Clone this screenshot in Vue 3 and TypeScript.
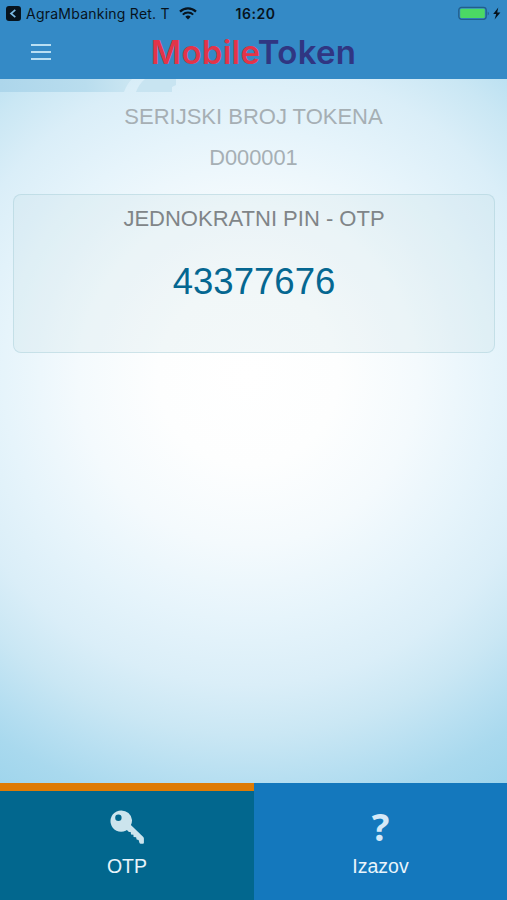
<script setup lang="ts">
import { ref } from 'vue'

interface Tab {
  id: 'otp' | 'challenge'
  label: string
}

const tabs: Tab[] = [
  { id: 'otp', label: 'OTP' },
  { id: 'challenge', label: 'Izazov' },
]
const active = ref<Tab['id']>('otp')
const serial = 'D000001'
const otp = '43377676'
</script>

<template>
  <div class="screen">
    <header class="top">
      <div class="status">
        <div class="status-left">
          <svg class="back" viewBox="0 0 15 15">
            <rect width="15" height="15" rx="3" fill="#07131d" />
            <path d="M9.3 3.9 5 7.5l4.3 3.6" fill="none" stroke="#7dbbe4" stroke-width="1.7" />
          </svg>
          <span class="carrier">AgraMbanking Ret. T</span>
          <svg class="wifi" viewBox="0 0 18 13" fill="none" stroke="#07131d">
            <path d="M1 4.6a11.4 11.4 0 0 1 16 0" stroke-width="2.2" />
            <path d="M3.8 7.6a7.4 7.4 0 0 1 10.4 0" stroke-width="2" />
            <path d="M9 12.4 6.3 9.7a3.9 3.9 0 0 1 5.4 0Z" fill="#07131d" stroke="none" />
          </svg>
        </div>
        <span class="clock">16:20</span>
        <div class="status-right">
          <svg class="battery" viewBox="0 0 43 15">
            <rect x="0.8" y="1.3" width="27.4" height="12" rx="2.8" fill="none" stroke="#235e8b" stroke-width="1.3" />
            <rect x="2.2" y="2.7" width="24.6" height="9.3" rx="1.2" fill="#4bd964" />
            <path d="M29.7 5.4a2.4 2.4 0 0 1 0 4Z" fill="#235e8b" />
            <path d="M40.3 1.5 35.2 8h3l-1.6 5.4L42.4 6.4h-3.2Z" fill="#07131d" />
          </svg>
        </div>
      </div>
      <div class="navbar">
        <button class="menu" aria-label="Menu"><i></i><i></i><i></i></button>
        <h1 class="logo"><span class="mobile">Mobile</span><span class="token">Token</span></h1>
      </div>
    </header>

    <main class="content">
      <svg class="ribbon" viewBox="0 0 180 14">
        <defs>
          <linearGradient id="band" x1="0" x2="1">
            <stop offset="0" stop-color="#add6eb" />
            <stop offset="0.65" stop-color="#b9ddee" />
            <stop offset="1" stop-color="#cbe6f2" />
          </linearGradient>
        </defs>
        <path d="M0 0h132q-5 5-8 13H0Z" fill="url(#band)" />
        <path d="M145 0h31v6l-4 2v5h-36Q139 5 145 0Z" fill="#c8e4f1" />
      </svg>
      <p class="caption">SERIJSKI BROJ TOKENA</p>
      <p class="serial">{{ serial }}</p>
      <section class="card">
        <h2 class="card-title">JEDNOKRATNI PIN - OTP</h2>
        <p class="code">{{ otp }}</p>
      </section>
    </main>

    <nav class="tabs">
      <button
        v-for="tab in tabs"
        :key="tab.id"
        class="tab"
        :class="{ active: active === tab.id }"
        @click="active = tab.id"
      >
        <svg v-if="tab.id === 'otp'" class="icon" viewBox="0 0 34 34">
          <path
            fill="#cce4ed"
            fill-rule="evenodd"
            d="M11.3.4a10.7 10.7 0 1 0 4.4 20.4l1.2-.8 2 2h1.8l.3 2.5 2.4.2.2 2.2 2.5.3.5 2.3 2 .4.9 3q.3.8 1.2.8h2.2q1 0 1-1v-4.2q0-.8-.6-1.4L20.9 14.9q1.3-2.4 1.1-5A10.7 10.7 0 0 0 11.3.4ZM8.4 4.6a3.2 3.2 0 1 1 0 6.4 3.2 3.2 0 0 1 0-6.4Z"
          />
        </svg>
        <span v-else class="icon question">?</span>
        <span class="label">{{ tab.label }}</span>
      </button>
    </nav>
  </div>
</template>

<style>
body {
  margin: 0;
}
</style>

<style scoped>
.screen {
  display: flex;
  flex-direction: column;
  height: 900px;
  overflow: hidden;
  font-family: 'Liberation Sans', Arial, sans-serif;
  background: radial-gradient(circle at 248px 375px, #fff 0, #fdfefe 90px, #f4fafd 170px, #e6f4fb 245px, #daeef8 310px, #cae7f4 360px, #b7dff1 405px, #a9d9ee 440px, #9fd5ec 480px);
}
p,
h1,
h2 {
  margin: 0;
  font-weight: 400;
}
button {
  padding: 0;
  border: 0;
  background: none;
  font: inherit;
}
.top {
  flex: none;
  height: 79px;
  background: #348ac6;
}
.status {
  display: grid;
  grid-template-columns: 1fr auto 1fr;
  align-items: center;
  height: 27px;
  padding: 0 6px;
  color: #07131d;
  font-family: Inter, sans-serif;
}
.status-left {
  display: flex;
  align-items: center;
}
.back {
  width: 15px;
  height: 15px;
  margin-right: 5px;
}
.carrier {
  font-size: 14px;
  letter-spacing: 0.24px;
  white-space: nowrap;
}
.wifi {
  width: 18px;
  height: 13px;
  margin-left: 9px;
}
.clock {
  margin-left: 4px;
  font-size: 14px;
  font-weight: 600;
  letter-spacing: 0.5px;
}
.status-right {
  display: flex;
  justify-content: flex-end;
}
.battery {
  width: 43px;
  height: 15px;
}
.navbar {
  display: grid;
  grid-template-columns: 51px 1fr 51px;
  align-items: center;
  height: 49px;
}
.menu {
  display: flex;
  flex-direction: column;
  gap: 5px;
  width: 20px;
  margin-left: 31px;
}
.menu i {
  height: 2px;
  background: #b9dff3;
}
.logo {
  font-family: Inter, sans-serif;
  font-size: 33px;
  font-weight: 600;
  letter-spacing: 0.3px;
  line-height: 48px;
  text-align: center;
  white-space: nowrap;
}
.mobile {
  color: #e33449;
}
.token {
  color: #303682;
}
.content {
  flex: 1;
  display: flex;
  flex-direction: column;
  text-align: center;
}
.ribbon {
  width: 180px;
  height: 14px;
}
.caption,
.serial {
  color: #a6afb4;
  font-size: 22px;
  line-height: 26px;
}
.caption {
  margin-top: 11px;
}
.serial {
  margin-top: 15px;
  font-size: 21.8px;
}
.card {
  box-sizing: border-box;
  height: 159px;
  margin: 23px 12px 0 13px;
  border: 1.5px solid rgba(165, 205, 215, 0.45);
  border-radius: 8px;
  background: rgba(195, 220, 224, 0.2);
}
.card-title {
  margin-top: 11px;
  color: #808588;
  font-size: 22px;
  line-height: 26px;
}
.code {
  margin-top: 29px;
  color: #056791;
  font-size: 36.6px;
  line-height: 42px;
}
.tabs {
  flex: none;
  display: grid;
  grid-template-columns: 254px 253px;
  height: 117px;
}
.tab {
  box-sizing: border-box;
  display: flex;
  flex-direction: column;
  align-items: center;
  padding-top: 19px;
  border-top: 8px solid #1478bd;
  background: #1478bd;
}
.tab.active {
  border-top-color: #de7b05;
  background: #02678e;
}
.icon {
  width: 34px;
  height: 34px;
}
.question {
  color: #d5e8f7;
  font-family: 'Open Sans', sans-serif;
  font-size: 37px;
  font-weight: 700;
  line-height: 34px;
  text-align: center;
}
.label {
  margin-top: 11px;
  color: #e9f4fb;
  font-size: 19.5px;
  line-height: 22px;
}
</style>
